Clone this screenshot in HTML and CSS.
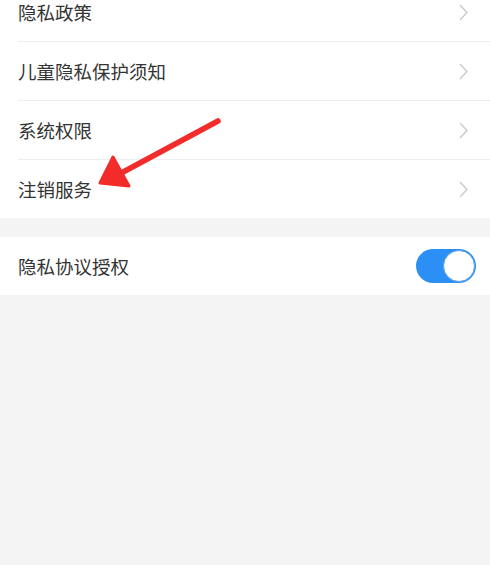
FILE: index.html
```html
<!DOCTYPE html>
<html lang="zh-CN">
<head>
<meta charset="utf-8">
<title>隐私设置</title>
<link rel="stylesheet" href="styles.css">
</head>
<body>
<main class="page">
  <ul class="group group-first">
    <li class="row"><span class="label">隐私政策</span><svg class="chevron" width="9" height="17" viewBox="0 0 9 17"><polyline points="1,1 8,8.5 1,16" fill="none" stroke="#cacaca" stroke-width="1.4"/></svg></li>
    <li class="row"><span class="label">儿童隐私保护须知</span><svg class="chevron" width="9" height="17" viewBox="0 0 9 17"><polyline points="1,1 8,8.5 1,16" fill="none" stroke="#cacaca" stroke-width="1.4"/></svg></li>
    <li class="row"><span class="label">系统权限</span><svg class="chevron" width="9" height="17" viewBox="0 0 9 17"><polyline points="1,1 8,8.5 1,16" fill="none" stroke="#cacaca" stroke-width="1.4"/></svg></li>
    <li class="row"><span class="label">注销服务</span><svg class="chevron" width="9" height="17" viewBox="0 0 9 17"><polyline points="1,1 8,8.5 1,16" fill="none" stroke="#cacaca" stroke-width="1.4"/></svg></li>
  </ul>
  <ul class="group">
    <li class="row"><span class="label">隐私协议授权</span><span class="switch on"><span class="knob"></span></span></li>
  </ul>
  <svg class="pointer" width="490" height="565" viewBox="0 0 490 565" aria-hidden="true">
    <line x1="218" y1="121" x2="112" y2="178" stroke="#f22b2b" stroke-width="5.5" stroke-linecap="round"/>
    <polygon points="100,183 113,157 129,186" fill="#f22b2b" stroke="#f22b2b" stroke-width="3" stroke-linejoin="round"/>
  </svg>
</main>
</body>
</html>
```
FILE: styles.css
```css
html, body {
  margin: 0;
  padding: 0;
  background: #f4f4f4;
}

.page {
  position: relative;
  width: 490px;
  height: 565px;
  overflow: hidden;
  font-family: "Noto Sans CJK SC", "Noto Sans", sans-serif;
  color: #333;
}

.group {
  list-style: none;
  margin: 0 0 19px;
  padding: 0 0 0 18px;
  background: #fff;
}

.group-first {
  margin-top: -17px;
}

.row {
  display: flex;
  align-items: center;
  justify-content: space-between;
  height: 58px;
  padding-right: 14px;
  border-bottom: 1px solid #eeeeee;
  font-size: 18.5px;
}

.row:last-child {
  border-bottom: none;
}

.label {
  line-height: 1;
}

.chevron {
  display: block;
  margin-right: 8px;
}

.switch {
  display: flex;
  align-items: center;
  justify-content: flex-end;
  width: 60px;
  height: 34px;
  box-sizing: border-box;
  padding: 1px;
  border-radius: 17px;
  background: #2b8ff6;
}

.knob {
  width: 32px;
  height: 32px;
  box-sizing: border-box;
  border-radius: 50%;
  background: #fff;
  border: 1px solid #5a9fe8;
}

.pointer {
  position: absolute;
  left: 0;
  top: 0;
  pointer-events: none;
}
```
